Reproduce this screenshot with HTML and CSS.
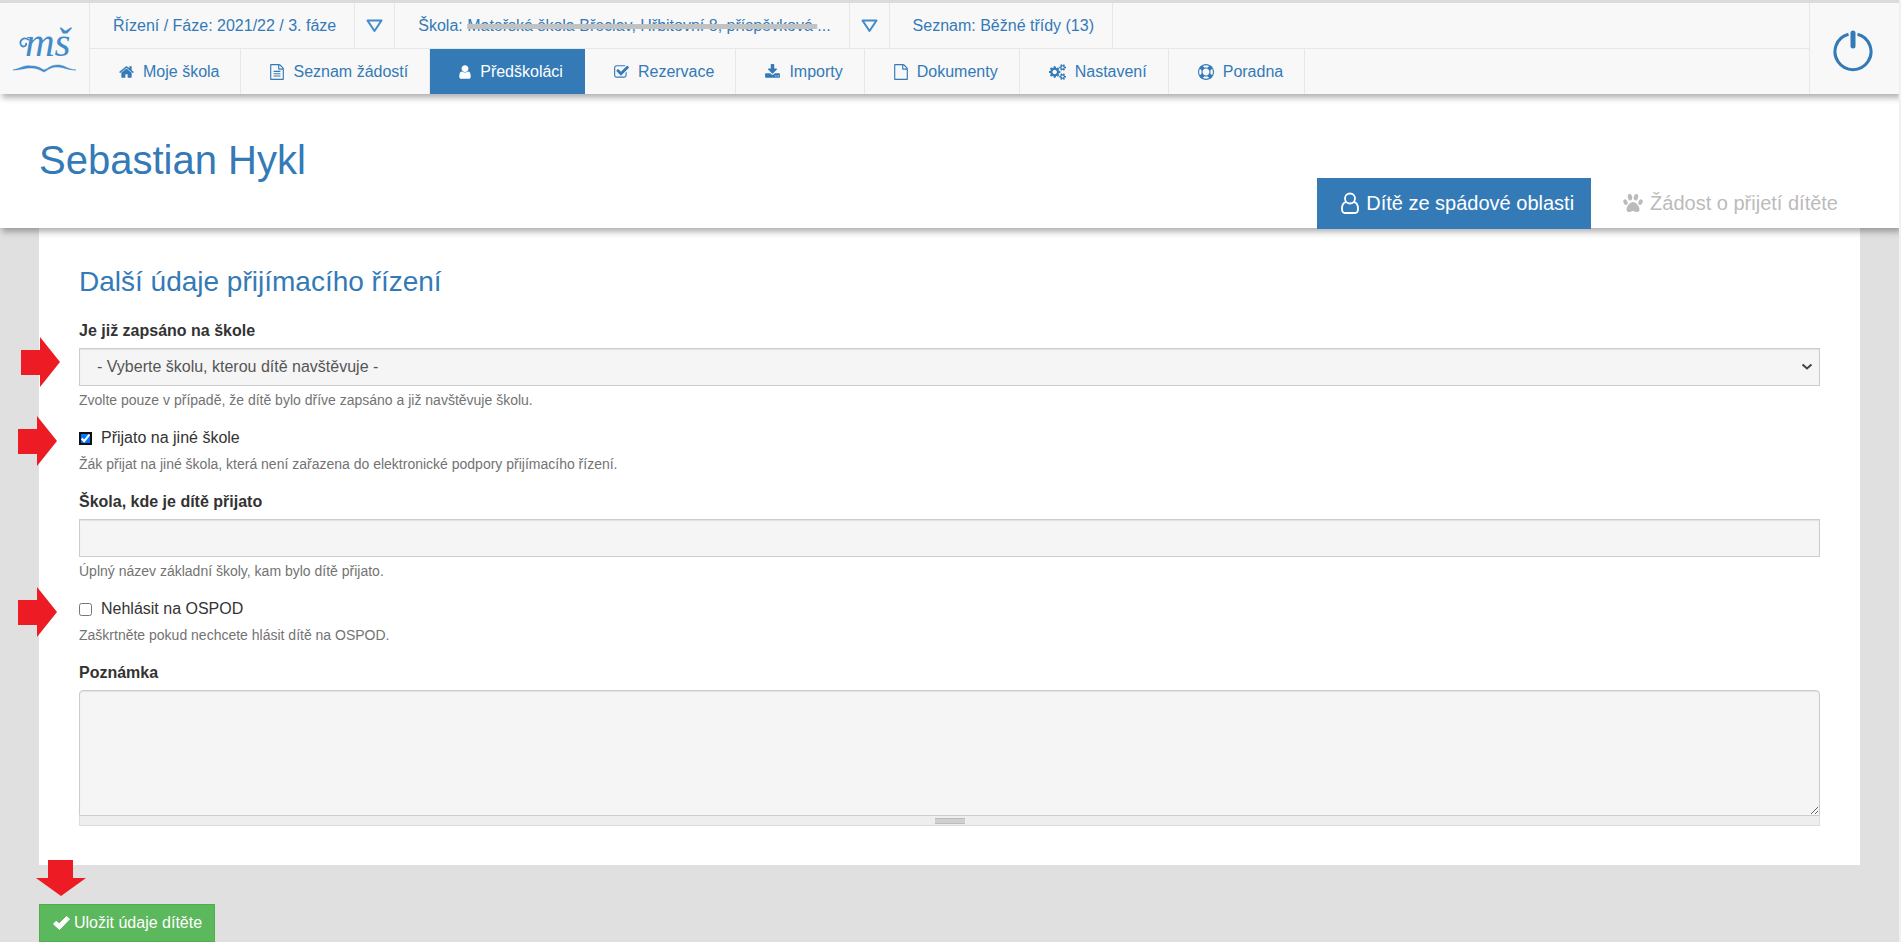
FILE: index.html
```html
<!DOCTYPE html>
<html lang="cs">
<head>
<meta charset="utf-8">
<title>Sebastian Hykl</title>
<link rel="stylesheet" href="styles.css">
</head>
<body>
<header class="topbar">
  <a class="logo" href="#" aria-label="Mateřské školy">
    <svg width="66" height="60" viewBox="0 0 66 60" aria-hidden="true">
      <text class="logo-text" x="13" y="37">mš</text>
      <path d="M17 21C11 17 7 22 9 26C11 29 15 27 14 24" fill="none" stroke="currentColor" stroke-width="1.800"/>
      <path d="M1 51C10 49 12 46 19 47C26 47 28 49 32 51C37 49 39 46 46 46C53 46 54 50 64 51C54 51 52 48 46 48C39 48 37 50 32 53C28 51 25 49 19 49C12 49 9 51 1 51Z" fill="currentColor" stroke="currentColor" stroke-width=".5"/>
    </svg>
  </a>
  <div class="bars">
    <nav class="bar context">
      <a href="#" class="ctx">Řízení / Fáze: 2021/22 / 3. fáze</a>
      <button type="button" class="drop" aria-label="Změnit fázi"><svg width="17" height="14" viewBox="0 0 17 14"><path d="M1.500 1.500H15.500L8.500 12Z"/></svg></button>
      <a href="#" class="ctx">Škola: <s>Mateřská škola Břeclav, Hřbitovní 8, příspěvková </s>...</a>
      <button type="button" class="drop" aria-label="Změnit školu"><svg width="17" height="14" viewBox="0 0 17 14"><path d="M1.500 1.500H15.500L8.500 12Z"/></svg></button>
      <a href="#" class="ctx">Seznam: Běžné třídy (13)</a>
    </nav>
    <nav class="bar menu">
      <a href="#"><svg class="i15" viewBox="64 0 1664 1792"><path d="M1472 992v480q0 26-19 45t-45 19h-384v-384h-256v384h-384q-26 0-45-19t-19-45v-480q0-1 .5-3t.5-3l575-474 575 474q1 2 1 6zm223-69l-62 74q-8 9-21 11h-3q-13 0-21-7l-692-577-692 577q-12 8-24 7-13-2-21-11l-62-74q-8-10-7-23.500t11-21.500l719-599q32-26 76-26t76 26l244 204v-195q0-14 9-23t23-9h192q14 0 23 9t9 23v408l219 182q10 8 11 21.500t-7 23.500z"/></svg>Moje škola</a>
      <a href="#"><svg class="i14" viewBox="128 0 1536 1792"><path d="M1596 380q28 28 48 76t20 88v1152q0 40-28 68t-68 28h-1344q-40 0-68-28t-28-68v-1600q0-40 28-68t68-28h896q40 0 88 20t76 48zm-444-244v376h376q-10-29-22-41l-313-313q-12-12-41-22zm384 1528v-1024h-416q-40 0-68-28t-28-68v-416h-768v1536h1280zm-1024-864q0-14 9-23t23-9h704q14 0 23 9t9 23v64q0 14-9 23t-23 9h-704q-14 0-23-9t-9-23v-64zm736 224q14 0 23 9t9 23v64q0 14-9 23t-23 9h-704q-14 0-23-9t-9-23v-64q0-14 9-23t23-9h704zm0 256q14 0 23 9t9 23v64q0 14-9 23t-23 9h-704q-14 0-23-9t-9-23v-64q0-14 9-23t23-9h704z"/></svg>Seznam žádostí</a>
      <a href="#" class="active" aria-current="page"><svg class="i12" viewBox="256 0 1280 1792"><path d="M1536 1399q0 109-62.500 187t-150.500 78h-854q-88 0-150.500-78t-62.500-187q0-85 8.500-160.500t31.500-152 58.500-131 94-89 134.500-34.500q131 128 313 128t313-128q76 0 134.500 34.500t94 89 58.500 131 31.500 152 8.500 160.500zm-256-887q0 159-112.500 271.500t-271.500 112.500-271.500-112.500-112.500-271.500 112.500-271.500 271.500-112.500 271.500 112.500 112.500 271.500z"/></svg>Předškoláci</a>
      <a href="#"><svg class="i15" viewBox="64 0 1664 1792"><path d="M1472 930v318q0 119-84.500 203.500t-203.500 84.500h-832q-119 0-203.500-84.500t-84.500-203.500v-832q0-119 84.500-203.500t203.500-84.500h832q63 0 117 25 15 7 18 23 3 17-9 29l-49 49q-10 10-23 10-3 0-9-2-23-6-45-6h-832q-66 0-113 47t-47 113v832q0 66 47 113t113 47h832q66 0 113-47t47-113v-254q0-13 9-22l64-64q10-10 23-10 6 0 12 3 20 8 20 29zm231-489l-814 814q-24 24-57 24t-57-24l-430-430q-24-24-24-57t24-57l110-110q24-24 57-24t57 24l263 263 647-647q24-24 57-24t57 24l110 110q24 24 24 57t-24 57z"/></svg>Rezervace</a>
      <a href="#"><svg class="i15" viewBox="64 0 1664 1792"><path d="M1344 1344q0-26-19-45t-45-19-45 19-19 45 19 45 45 19 45-19 19-45zm256 0q0-26-19-45t-45-19-45 19-19 45 19 45 45 19 45-19 19-45zm128-224v320q0 40-28 68t-68 28h-1472q-40 0-68-28t-28-68v-320q0-40 28-68t68-28h465l135 136q58 56 136 56t136-56l136-136h464q40 0 68 28t28 68zm-325-569q17 41-14 70l-448 448q-18 19-45 19t-45-19l-448-448q-31-29-14-70 17-39 59-39h256v-448q0-26 19-45t45-19h256q26 0 45 19t19 45v448h256q42 0 59 39z"/></svg>Importy</a>
      <a href="#"><svg class="i14" viewBox="128 0 1536 1792"><path d="M1596 380q28 28 48 76t20 88v1152q0 40-28 68t-68 28h-1344q-40 0-68-28t-28-68v-1600q0-40 28-68t68-28h896q40 0 88 20t76 48zm-444-244v376h376q-10-29-22-41l-313-313q-12-12-41-22zm384 1528v-1024h-416q-40 0-68-28t-28-68v-416h-768v1536h1280z"/></svg>Dokumenty</a>
      <a href="#"><svg class="i17" viewBox="0 0 1920 1792"><path d="M896 896q0-106-75-181t-181-75-181 75-75 181 75 181 181 75 181-75 75-181zm768 512q0-52-38-90t-90-38-90 38-38 90q0 53 37.500 90.500t90.500 37.500 90.500-37.500 37.500-90.500zm0-1024q0-52-38-90t-90-38-90 38-38 90q0 53 37.500 90.500t90.500 37.500 90.500-37.500 37.500-90.500zm-384 421v185q0 10-7 19.500t-16 10.500l-155 24q-11 35-32 76 34 48 90 115 7 11 7 20 0 12-7 19-23 30-82.500 89.500t-78.500 59.500q-11 0-21-7l-115-90q-37 19-77 31-11 108-23 155-7 24-30 24h-186q-11 0-20-7.500t-10-17.500l-23-153q-34-10-75-31l-118 89q-7 7-20 7-11 0-21-8-144-133-144-160 0-9 7-19 10-14 41-53t47-61q-23-44-35-82l-152-24q-10-1-17-9.500t-7-19.500v-185q0-10 7-19.500t16-10.500l155-24q11-35 32-76-34-48-90-115-7-11-7-20 0-12 7-20 22-30 82-89t79-59q11 0 21 7l115 90q34-18 77-32 11-108 23-154 7-24 30-24h186q11 0 20 7.500t10 17.500l23 153q34 10 75 31l118-89q8-7 20-7 11 0 21 8 144 133 144 160 0 8-7 19-12 16-42 54t-45 60q23 48 34 82l152 23q10 2 17 10.500t7 19.500zm640 533v140q0 16-149 31-12 27-30 52 51 113 51 138 0 4-4 7-122 71-124 71-8 0-46-47t-52-68q-20 2-30 2t-30-2q-14 21-52 68t-46 47q-2 0-124-71-4-3-4-7 0-25 51-138-18-25-30-52-149-15-149-31v-140q0-16 149-31 13-29 30-52-51-113-51-138 0-4 4-7 4-2 35-20t59-34 30-16q8 0 46 46.500t52 67.500q20-2 30-2t30 2q51-71 92-112l6-2q4 0 124 70 4 3 4 7 0 25-51 138 17 23 30 52 149 15 149 31zm0-1024v140q0 16-149 31-12 27-30 52 51 113 51 138 0 4-4 7-122 71-124 71-8 0-46-47t-52-68q-20 2-30 2t-30-2q-14 21-52 68t-46 47q-2 0-124-71-4-3-4-7 0-25 51-138-18-25-30-52-149-15-149-31v-140q0-16 149-31 13-29 30-52-51-113-51-138 0-4 4-7 4-2 35-20t59-34 30-16q8 0 46 46.500t52 67.500q20-2 30-2t30 2q51-71 92-112l6-2q4 0 124 70 4 3 4 7 0 25-51 138 17 23 30 52 149 15 149 31z"/></svg>Nastavení</a>
      <a href="#"><svg class="i16" viewBox="0 0 1792 1792"><path d="M896 0q182 0 348 71t286 191 191 286 71 348-71 348-191 286-286 191-348 71-348-71-286-191-191-286-71-348 71-348 191-286 286-191 348-71zm0 128q-190 0-361 90l194 194q82-28 167-28t167 28l194-194q-171-90-361-90zm-678 1129l194-194q-28-82-28-167t28-167l-194-194q-90 171-90 361t90 361zm678 407q190 0 361-90l-194-194q-82 28-167 28t-167-28l-194 194q171 90 361 90zm0-384q159 0 271.500-112.500t112.500-271.500-112.500-271.500-271.500-112.500-271.500 112.500-112.500 271.500 112.500 271.500 271.500 112.500zm484-217l194 194q90-171 90-361t-90-361l-194 194q28 82 28 167t-28 167z"/></svg>Poradna</a>
    </nav>
  </div>
  <a class="power" href="#" aria-label="Odhlásit">
    <svg width="40" height="44" viewBox="0 0 40 44" fill="none" stroke="currentColor" stroke-linecap="round"><path d="M15.500 5.200A18 18 0 1 0 24.500 5.200" stroke-width="3" stroke-linecap="butt"/><path d="M20 4V17" stroke-width="5"/></svg>
  </a>
</header>

<div class="pagehead">
  <h1>Sebastian Hykl</h1>
  <nav class="tabs">
    <a href="#" class="active" aria-current="page"><svg width="18" height="22" viewBox="0 0 18 22" fill="none" stroke="currentColor" stroke-width="1.800"><circle cx="9" cy="6.500" r="5"/><path d="M5 10.200C2 10.500 1 13.500 1 17C1 19.500 2.200 21 4 21H14C15.800 21 17 19.500 17 17C17 13.500 16 10.500 13 10.200"/></svg>Dítě ze spádové oblasti</a>
    <a href="#"><svg width="20" height="20" viewBox="0 0 20 20" fill="currentColor"><ellipse cx="7" cy="4.200" rx="2.200" ry="3.300" transform="rotate(-10 7 4.200)"/><ellipse cx="13" cy="4.200" rx="2.200" ry="3.300" transform="rotate(10 13 4.200)"/><ellipse cx="2.500" cy="9.200" rx="2" ry="2.900" transform="rotate(-24 2.500 9.200)"/><ellipse cx="17.500" cy="9.200" rx="2" ry="2.900" transform="rotate(24 17.500 9.200)"/><path d="M10 9C13 9 16.500 13.500 16.500 16.500C16.500 18.500 15 19 13.500 19C12 19 11.300 18 10 18C8.700 18 8 19 6.500 19C5 19 3.500 18.500 3.500 16.500C3.500 13.500 7 9 10 9Z"/></svg>Žádost o přijetí dítěte</a>
  </nav>
</div>

<form class="page">
  <section class="panel">
    <h2>Další údaje přijímacího řízení</h2>
    <div class="field">
      <svg class="arrow arrow-select" width="39" height="50" viewBox="0 0 39 50"><path d="M0 13H19V0L39 25L19 50V38H0Z"/></svg>
      <label class="title" for="skola">Je již zapsáno na škole</label>
      <div class="selectbox">
        <select id="skola" class="control"><option>- Vyberte školu, kterou dítě navštěvuje -</option></select>
        <svg class="chevron" width="12" height="8" viewBox="0 0 12 8"><path d="M1.500 1.500L6 5.500L10.500 1.500"/></svg>
      </div>
      <p class="help">Zvolte pouze v případě, že dítě bylo dříve zapsáno a již navštěvuje školu.</p>
    </div>
    <div class="field">
      <svg class="arrow arrow-check" width="39" height="50" viewBox="0 0 39 50"><path d="M0 13H19V0L39 25L19 50V38H0Z"/></svg>
      <label class="check"><input type="checkbox" class="focused" checked>Přijato na jiné škole</label>
      <p class="help">Žák přijat na jiné škola, která není zařazena do elektronické podpory přijímacího řízení.</p>
    </div>
    <div class="field">
      <label class="title" for="prijato">Škola, kde je dítě přijato</label>
      <input type="text" id="prijato" class="control">
      <p class="help">Úplný název základní školy, kam bylo dítě přijato.</p>
    </div>
    <div class="field">
      <svg class="arrow arrow-check" width="39" height="50" viewBox="0 0 39 50"><path d="M0 13H19V0L39 25L19 50V38H0Z"/></svg>
      <label class="check"><input type="checkbox">Nehlásit na OSPOD</label>
      <p class="help">Zaškrtněte pokud nechcete hlásit dítě na OSPOD.</p>
    </div>
    <div class="field">
      <label class="title" for="poznamka">Poznámka</label>
      <textarea id="poznamka" class="control note"></textarea>
      <div class="grippie"><span></span></div>
    </div>
  </section>
  <div class="actions">
    <svg class="arrow arrow-save" width="50" height="36" viewBox="0 0 50 36"><path d="M12 0H37V18H50L25 36L0 18H12Z"/></svg>
    <button type="submit" class="save"><svg width="17" height="14" viewBox="0 0 17 14"><path d="M0.500 8L3.200 5.200L6.200 7.800L13.500 .5L16.500 3L6.500 13.500Z" fill="currentColor" stroke="currentColor" stroke-linejoin="round"/></svg>Uložit údaje dítěte</button>
  </div>
</form>
</body>
</html>
```
FILE: styles.css
```css
* { box-sizing: border-box; }

html { background: #f1f1f1; }

body {
  margin: 0 2px 0 0;
  min-height: 100vh;
  padding-top: 1px;
  background: #e0e0e0;
  color: #333;
  font: 16px/24px "Liberation Sans", Arial, sans-serif;
}

a { color: #337ab7; text-decoration: none; }

.topbar {
  position: relative;
  z-index: 2;
  display: flex;
  height: 93px;
  border-top: 2px solid #d9dcdb;
  background: #f8f8f8;
  color: #337ab7;
  box-shadow: 2px 4px 6px rgba(0, 0, 0, .3);
}

.logo {
  display: flex;
  align-items: center;
  justify-content: center;
  width: 90px;
  border-right: 1px solid #e7e7e7;
  color: #428bca;
}

.logo svg { overflow: visible; }

.logo-text {
  font: italic 41px "Liberation Serif", serif;
  fill: currentColor;
}

.bars { flex: 1; display: flex; flex-direction: column; }
.bar { flex: 1; display: flex; }
.context { border-bottom: 1px solid #e7e7e7; }

.bar a {
  display: flex;
  align-items: center;
  border-right: 1px solid #e7e7e7;
  white-space: pre;
}

.bar .ctx { padding: 0 18px 0 23px; }

.ctx s { text-decoration: line-through 5px #c2c2c2; }

.drop {
  display: flex;
  align-items: center;
  justify-content: center;
  width: 40px;
  padding: 0;
  border: 0;
  border-right: 1px solid #e7e7e7;
  background: none;
}

.drop path { fill: none; stroke: #428bca; stroke-width: 2; stroke-linejoin: round; }

.menu a { gap: 9px; padding: 0 21px 0 29px; }
.menu svg { height: 16px; fill: currentColor; }
.i12 { width: 12px; }
.i14 { width: 14px; }
.i15 { width: 15px; }
.i16 { width: 16px; }
.i17 { width: 17px; }

.menu .active { background: #337ab7; color: #fff; border-color: #337ab7; }

.power {
  display: flex;
  align-items: center;
  justify-content: center;
  width: 90px;
  padding: 4px 3px 0 0;
  border-left: 1px solid #e7e7e7;
}

.pagehead {
  position: relative;
  z-index: 1;
  display: flex;
  justify-content: space-between;
  height: 134px;
  padding: 0 44px 0 39px;
  background: #fff;
  box-shadow: 2px 4px 6px rgba(0, 0, 0, .3);
}

h1, h2 { margin: 0; color: #337ab7; font-weight: 400; }
h1 { padding-top: 42px; font-size: 40px; line-height: 48px; }
h2 { margin-bottom: 20px; font-size: 28px; line-height: 34px; }

.tabs { display: flex; align-items: flex-end; gap: 8px; margin-bottom: -1px; }

.tabs a {
  display: flex;
  align-items: center;
  gap: 7px;
  height: 51px;
  padding: 0 17px 2px 24px;
  color: #bbb;
  font-size: 20px;
}

.tabs .active { background: #337ab7; color: #fff; }

.panel { margin: 0 39px; padding: 37px 40px 39px; background: #fff; }

.field { position: relative; }
.field + .field { margin-top: 16px; }

.title { display: block; margin-bottom: 5px; font-weight: 700; }

.control {
  display: block;
  width: 100%;
  height: 38px;
  padding: 0 17px;
  border: 1px solid #ccc;
  border-radius: 0;
  background: #f5f5f5;
  box-shadow: inset 0 1px 1px rgba(0, 0, 0, .08);
  color: #555;
  font: inherit;
  appearance: none;
}

.selectbox { position: relative; }

.chevron {
  position: absolute;
  top: 15px;
  right: 7px;
  fill: none;
  stroke: #444;
  stroke-width: 2;
  pointer-events: none;
}

.help { margin: 4px 0 0; color: #737373; font-size: 14px; line-height: 20px; }

.check { display: flex; align-items: center; gap: 9px; }
.check input { width: 13px; height: 13px; margin: 0; }
.check .focused { outline: 2px solid #101010; outline-offset: -2px; border-radius: 3px; }

.note { height: 126px; border-radius: 4px 4px 0 0; resize: vertical; }

.grippie {
  display: flex;
  align-items: center;
  justify-content: center;
  height: 10px;
  border: 1px solid #ddd;
  border-top: 0;
  background: #eee;
}

.grippie span {
  width: 30px;
  height: 6px;
  border: solid #bbb;
  border-width: 1px 0;
  background: #d0d0d0;
}

.actions { position: relative; padding: 39px 39px 0; }

.save {
  display: flex;
  align-items: center;
  gap: 4px;
  height: 38px;
  padding: 0 12px 0 13px;
  border: 1px solid #4cae4c;
  background: #5cb85c;
  color: #fff;
  font: inherit;
}

.arrow { position: absolute; fill: #ed1c24; }
.arrow-select { top: 18px; left: -58px; }
.arrow-check { top: -10px; left: -61px; }
.arrow-save { top: -5px; left: 36px; }
```
